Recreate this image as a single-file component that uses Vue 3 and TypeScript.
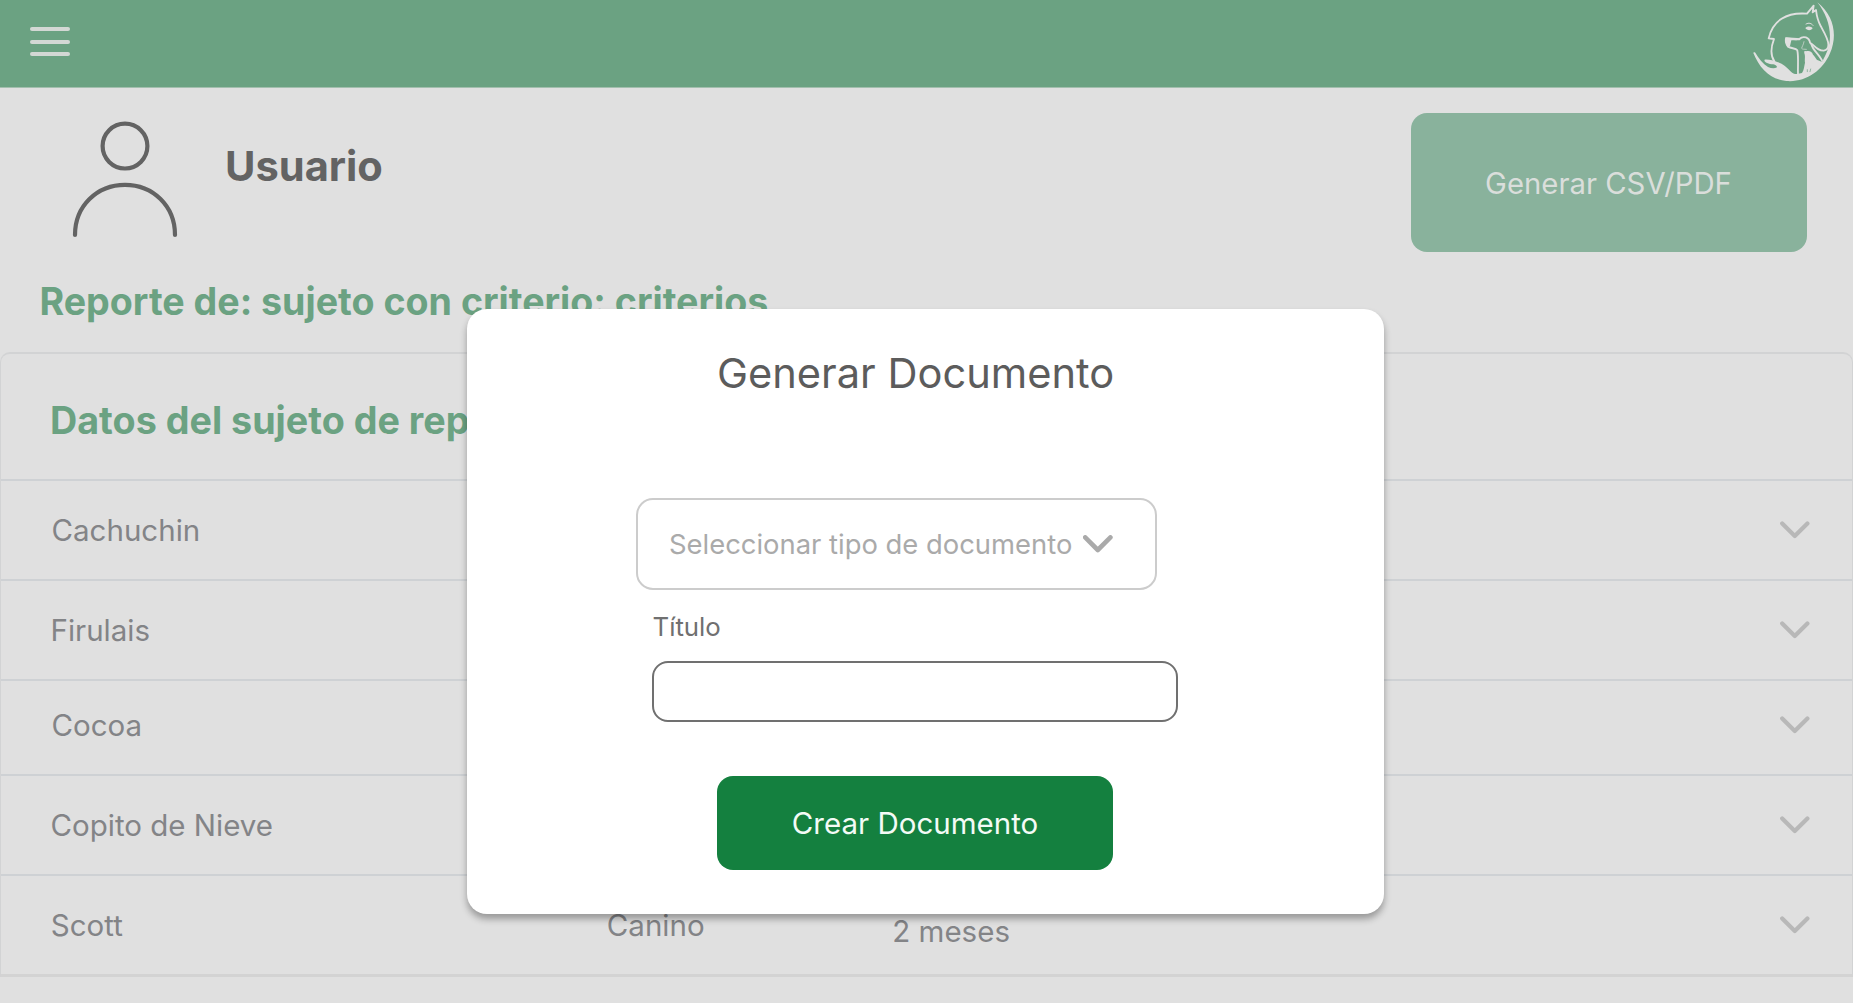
<script setup lang="ts">
import { ref } from 'vue'

interface Subject {
  name: string
  indent: number
  height: number
  lift: number
  species?: string
  age?: string
}

const subjects: Subject[] = [
  { name: 'Cachuchin', indent: 50.5, height: 100, lift: 0 },
  { name: 'Firulais', indent: 49.5, height: 100, lift: 0 },
  { name: 'Cocoa', indent: 50.5, height: 95, lift: 5 },
  { name: 'Copito de Nieve', indent: 49.5, height: 100, lift: 0 },
  { name: 'Scott', indent: 49.8, height: 100, lift: 0, species: 'Canino', age: '2 meses' },
]

const title = ref('')
</script>

<template>
  <div class="page">
    <header class="topbar">
      <button class="menu" aria-label="Menú"><span /><span /><span /></button>
      <svg class="logo" viewBox="0 0 360 261" fill="none" stroke="#e0e0e0" stroke-linecap="round" stroke-linejoin="round">
        <path d="M61 159 C80 205 110 238 160 243 C215 248 268 215 291 160 C314 107 304 48 253 7 C287 50 301 105 283 152 C276 169 272 176 268 184 C262 186 257 181 252 180 C247 172 243 166 240 164 C238 156 229 150 219 154 C214 152 213 155 214 160 C218 169 214 178 216 188 C213 199 214 209 207 219 L196 221 C190 223 180 222 174 215 C162 203 150 192 135 187 C122 182 108 178 95 179 C91 185 105 192 121 193 C128 195 132 198 132 202 C124 207 114 205 105 201 C90 191 76 174 67 158 C65 156 60 157 61 159 Z" fill="#e0e0e0" stroke="none" />
        <path d="M124 184 C112 166 115 138 123 117 L107 115 C119 62 160 36 222 41 L242 17 L239 37 L249 30 C251 47 253 60 263 78 C274 98 288 121 286 136 C286 146 280 151 272 152 C258 152 251 145 239 134 L231 128 C229 112 211 106 199 117" stroke-width="5.5" />
        <path d="M190 118 L160 115 C156 120 159 132 165 140 C176 146 188 144 193 151 C197 171 194 195 195 222" stroke-width="5.5" />
        <path d="M157 112 L204 115 L200 121 L175 121 L171 138 L162 138 C157 130 155 120 157 112 Z" fill="#e0e0e0" stroke="none" />
        <path d="M235 132 C239 151 256 160 267 181" stroke-width="5.5" />
        <path d="M219 72 C228 67 235 70 240 76" stroke-width="3" />
        <path d="M217 84 C225 77 235 79 239 85 C233 93 222 92 217 84 Z" fill="#e0e0e0" stroke="none" />
        <path d="M213 125 C211 136 207 139 206 145 C209 149 214 147 220 148" stroke-width="2" />
        <path d="M223 209 L223 215 M233 207 L231 215" stroke="#6ba282" stroke-width="2" />
      </svg>
    </header>

    <section class="profile">
      <svg class="avatar" viewBox="0 0 108 120" fill="none" stroke="#636363" stroke-width="4.2" stroke-linecap="round">
        <circle cx="54" cy="26.1" r="22.4" />
        <path d="M4 115 C4 86 26 64.9 54 64.9 C82 64.9 104 86 104 115" />
      </svg>
      <h1 class="username">Usuario</h1>
      <button class="export">Generar CSV/PDF</button>
    </section>

    <h2 class="report-title">Reporte de: sujeto con criterio: criterios</h2>

    <section class="card">
      <h2 class="card-title">Datos del sujeto de reporte</h2>
      <div
        v-for="s in subjects"
        :key="s.name"
        class="row"
        :style="{ height: s.height + 'px', paddingLeft: s.indent + 'px', paddingBottom: s.lift + 'px' }"
      >
        <span class="name">{{ s.name }}</span>
        <span class="species">{{ s.species }}</span>
        <span class="age">{{ s.age }}</span>
        <svg class="chevron" viewBox="0 0 30 18"><path d="M2.2 2.4 L14.8 15 L27.4 2.4" /></svg>
      </div>
    </section>

    <div class="modal" role="dialog">
      <h2 class="modal-title">Generar Documento</h2>
      <div class="select">
        <span>Seleccionar tipo de documento</span>
        <svg class="chevron" viewBox="0 0 30 18"><path d="M2.2 2.4 L14.8 15 L27.4 2.4" /></svg>
      </div>
      <label class="label" for="title">Título</label>
      <input id="title" v-model="title" class="input" type="text" />
      <button class="create">Crear Documento</button>
    </div>
  </div>
</template>

<style>
body {
  margin: 0;
  background: #e0e0e0;
}
</style>

<style scoped>
.page {
  position: relative;
  width: 1853px;
  height: 1003px;
  overflow: hidden;
  box-sizing: border-box;
  background: #e0e0e0;
  font-family: Inter, sans-serif;
}
.page *,
.page *::before {
  box-sizing: border-box;
}
h1,
h2 {
  margin: 0;
}
button {
  border: 0;
  padding: 0;
  font-family: inherit;
}
.topbar {
  display: flex;
  justify-content: space-between;
  height: 88px;
  padding-left: 30px;
  border-bottom: 1px solid #a3bfae;
  background: #6ba282;
}
.menu {
  display: flex;
  flex-direction: column;
  gap: 8.3px;
  width: 40px;
  padding-top: 27px;
  background: none;
}
.menu span {
  height: 4.3px;
  flex: none;
  border-radius: 2px;
  background: #d3d8d4;
}
.logo {
  width: 120px;
  height: 87px;
}
.profile {
  display: flex;
  height: 179px;
  padding: 25px 46px 0 71px;
}
.avatar {
  width: 108px;
  height: 120px;
  margin-top: 7px;
}
.username {
  margin: 28px 0 0 46px;
  font-size: 41.6px;
  line-height: 50px;
  font-weight: 700;
  color: #636363;
}
.export {
  width: 396px;
  height: 139px;
  margin-left: auto;
  border-radius: 16px;
  background: #89b29c;
  color: #dadedb;
  font-size: 29.3px;
  padding: 2px 1px 0 0;
}
.report-title {
  height: 85px;
  padding: 10px 0 0 39.5px;
  font-size: 37.58px;
  line-height: 50px;
  font-weight: 700;
  color: #6ba282;
}
.card {
  height: 625px;
  border: 1px solid #d2d3d4;
  border-top-width: 2px;
  border-bottom: 3px solid #d3d3d3;
  border-radius: 10px 10px 0 0;
}
.card-title {
  height: 125px;
  padding: 41px 0 0 49px;
  font-size: 37.7px;
  line-height: 50px;
  font-weight: 700;
  color: #6ba282;
}
.row {
  display: grid;
  grid-template-columns: 556px 285.5px 1fr 30px;
  align-items: center;
  padding-right: 42.5px;
  border-top: 2px solid #ced1d4;
  font-size: 29.5px;
  color: #838487;
}
.age {
  padding-top: 12px;
}
.chevron {
  width: 30px;
  height: 18px;
  fill: none;
  stroke: #b8b8b8;
  stroke-width: 4.2;
  stroke-linecap: round;
  stroke-linejoin: round;
}
.row .chevron {
  margin-top: -1px;
}
.modal {
  position: absolute;
  left: 467px;
  top: 308.6px;
  width: 917px;
  height: 605px;
  border-radius: 20px;
  background: #fff;
  box-shadow: 0 5px 7px rgba(0, 0, 0, 0.32);
  display: flex;
  flex-direction: column;
  align-items: flex-start;
}
.modal-title {
  margin: 39px 0 0 250px;
  font-size: 41.6px;
  line-height: 50px;
  font-weight: 400;
  color: #5c5c5c;
}
.select {
  display: flex;
  align-items: center;
  width: 521px;
  height: 92px;
  margin: 100.4px 0 0 169px;
  padding: 1px 0 0 31px;
  border: 2px solid #ccc;
  border-radius: 17px;
  font-size: 27.4px;
  color: #aaa;
}
.select .chevron {
  flex: none;
  margin-left: 11px;
  stroke: #aaa;
  stroke-width: 4.6;
}
.label {
  margin: 21px 0 0 185.5px;
  font-size: 25.8px;
  line-height: 32px;
  color: #707070;
}
.input {
  width: 526px;
  height: 61px;
  margin: 18.4px 0 0 185.4px;
  border: 2px solid #707070;
  border-radius: 16px;
  background: none;
  padding: 0 16px;
  font: 25.8px Inter, sans-serif;
  outline: none;
}
.create {
  width: 396px;
  height: 94px;
  margin: 54px 0 0 250px;
  border-radius: 16px;
  background: #14803f;
  color: #f3fbf6;
  font-size: 29.5px;
}
</style>
